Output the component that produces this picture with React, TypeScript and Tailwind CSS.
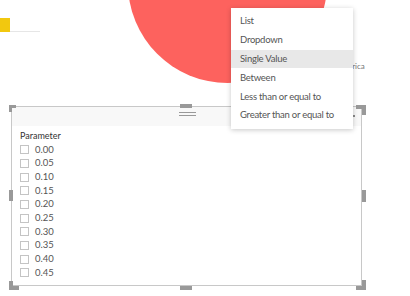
import React from "react";

const values = ["0.00", "0.05", "0.10", "0.15", "0.20", "0.25", "0.30", "0.35", "0.40", "0.45"];
const items = ["List", "Dropdown", "Single Value", "Between", "Less than or equal to", "Greater than or equal to"];

function Handles() {
  // selection handles drawn around the 351x180 frame, svg origin at (-3,-3)
  const c = "#999";
  return (
    <svg
      className="absolute left-[-3px] top-[-3px] pointer-events-none"
      width={357}
      height={186}
      viewBox="0 0 357 186"
    >
      <g fill={c}>
        <rect x={0} y={1} width={7} height={3} />
        <rect x={0} y={1} width={3} height={7} />
        <rect x={171} y={0} width={12} height={4} />
        <rect x={347} y={1} width={10} height={4} />
        <rect x={353} y={1} width={4} height={10} />
        <rect x={0} y={86} width={4} height={11} />
        <rect x={353} y={86} width={4} height={12} />
        <rect x={0} y={182} width={10} height={4} />
        <rect x={0} y={177} width={4} height={9} />
        <rect x={171} y={182} width={12} height={4} />
        <rect x={347} y={182} width={10} height={4} />
        <rect x={353} y={176} width={4} height={10} />
      </g>
      <circle cx={345} cy={12} r={1} fill="#666" />
    </svg>
  );
}

export default function App() {
  return (
    <div
      className="relative w-[410px] h-[296px] overflow-hidden bg-white"
      style={{ fontFamily: "Lato, 'Open Sans', sans-serif" }}
    >
      {/* fragment of a bar chart visual */}
      <div className="absolute left-0 top-[18px] flex items-end">
        <div className="w-[10px] h-[14px] bg-[#F2C80F]" />
        <div className="w-[30px] h-px bg-[#e6e6e6]" />
      </div>

      {/* pie chart */}
      <div className="absolute left-[128px] top-[-116px] w-[199px] h-[199px] rounded-full bg-[#FD625E]" />
      <div className="absolute left-[336px] top-[60px] text-[8px] leading-[12px] text-[#777]">America</div>

      {/* slicer visual */}
      <div className="absolute left-[11px] top-[106px] w-[351px] h-[180px] border border-[#c8c8c8] bg-white">
        <div className="h-[19px] bg-[#f8f8f8] flex justify-center pt-[5px] pl-[1px]">
          <div className="flex flex-col gap-[2px] w-[17px]">
            <div className="h-px bg-[#999]" />
            <div className="h-px bg-[#999]" />
          </div>
        </div>
        <div className="pl-[8px] pt-[3px]">
          <div className="h-[13px] text-[9px] leading-[13px] text-[#333]">Parameter</div>
          <div className="mt-[1px] flex flex-col">
            {values.map((v) => (
              <div key={v} className="h-[13.67px] flex items-center gap-[6px]">
                <div className="w-[9px] h-[9px] border border-[#c4c4c4] bg-white" />
                <span className="text-[9.5px] leading-[12px] text-[#555]">{v}</span>
              </div>
            ))}
          </div>
        </div>
        <Handles />
      </div>

      {/* dropdown menu */}
      <div className="absolute left-[231px] top-[8px] w-[122px] h-[121px] bg-white py-[4px] flex flex-col shadow-[0_1px_5px_rgba(0,0,0,0.22)]">
        {items.map((it) => (
          <div
            key={it}
            className={
              "h-[19px] flex items-center pl-[9px] text-[9.5px] tracking-[-0.25px] text-[#555] whitespace-nowrap " +
              (it === "Single Value" ? "bg-[#e8e8e8]" : "")
            }
          >
            {it}
          </div>
        ))}
      </div>
    </div>
  );
}
